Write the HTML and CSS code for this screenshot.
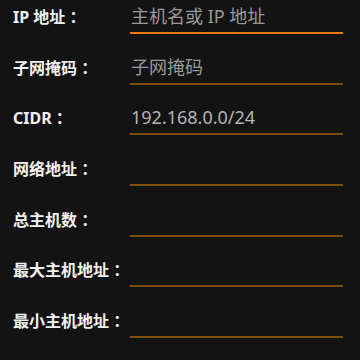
FILE: index.html
```html
<!DOCTYPE html>
<html>
<head>
<meta charset="utf-8">
<link rel="stylesheet" href="styles.css">
</head>
<body>
<div class="form">
  <div class="row"><div class="label">IP 地址 ：</div><div class="field focused"><span class="hint">主机名或 IP 地址</span></div></div>
  <div class="row"><div class="label">子网掩码 ：</div><div class="field"><span class="hint">子网掩码</span></div></div>
  <div class="row"><div class="label">CIDR ：</div><div class="field"><span class="value">192.168.0.0/24</span></div></div>
  <div class="row"><div class="label">网络地址 ：</div><div class="field"></div></div>
  <div class="row"><div class="label">总主机数 ：</div><div class="field"></div></div>
  <div class="row"><div class="label">最大主机地址 ：</div><div class="field"></div></div>
  <div class="row"><div class="label">最小主机地址 ：</div><div class="field"></div></div>
</div>
</body>
</html>
```
FILE: styles.css
```css
html, body {
  margin: 0;
  padding: 0;
  background: #131313;
  width: 360px;
  height: 360px;
  overflow: hidden;
}
.form {
  display: flex;
  flex-direction: column;
  padding-left: 13px;
  font-family: "Noto Sans", "Noto Sans CJK SC", sans-serif;
}
.row {
  display: grid;
  grid-template-columns: 117px 213px;
  height: 50.7px;
}
.label {
  height: 34px;
  line-height: 34px;
  font-size: 16px;
  font-weight: 700;
  color: #f2f2f2;
  white-space: pre;
}
.field {
  box-sizing: border-box;
  height: 34px;
  border-bottom: 2px solid #7d4c0f;
  line-height: 32px;
  font-size: 18px;
  padding-left: 1px;
  white-space: nowrap;
}
.field.focused {
  border-bottom-color: #f07800;
}
.hint {
  color: #9a9a9a;
}
.value {
  color: #b4b4b4;
}
```
